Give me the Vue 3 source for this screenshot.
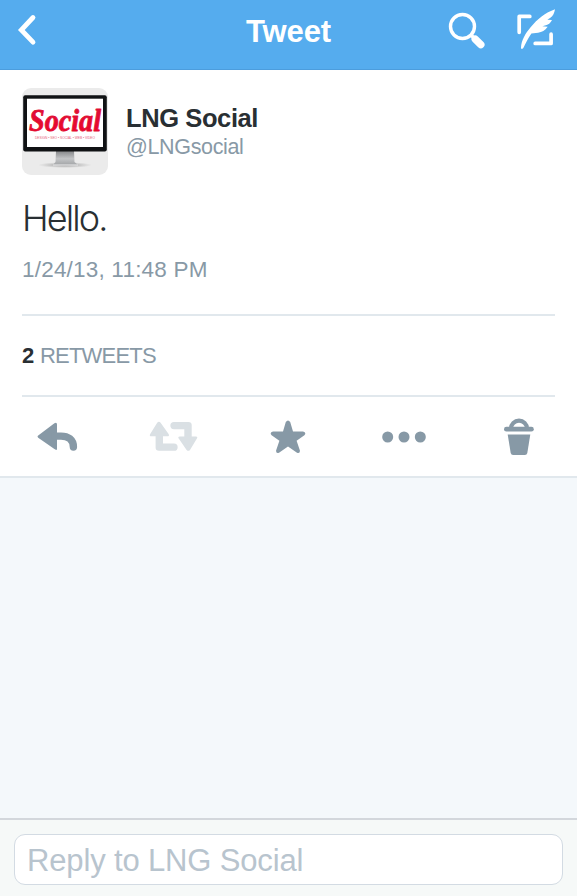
<template>
    <div class="tweet-page">
        <header class="nav-bar">
            <button class="nav-button back" aria-label="Back">
                <svg width="22" height="34" viewBox="0 0 22 34">
                    <path d="M16 4.5 4.3 17 16 29.2" fill="none" stroke="#fff" stroke-width="4.8" stroke-linecap="round" stroke-linejoin="miter" />
                </svg>
            </button>
            <h1 class="nav-title">Tweet</h1>
            <div class="nav-actions">
                <button class="nav-button" aria-label="Search">
                    <svg width="38" height="40" viewBox="0 0 38 40">
                        <circle cx="14.5" cy="16.5" r="12" fill="none" stroke="#fff" stroke-width="3.4" />
                        <path d="M23 25 26 28" stroke="#fff" stroke-width="3.5" />
                        <path d="M27.2 29.1 32.8 34.7" stroke="#fff" stroke-width="7.4" stroke-linecap="round" />
                    </svg>
                </button>
                <button class="nav-button" aria-label="Compose">
                    <svg width="40" height="42" viewBox="0 0 40 42">
                        <path d="M3.2 24.3V8.4H13.8M19.2 35.4H35.1V26.2" fill="none" stroke="#fff" stroke-width="3.7" stroke-linecap="round" stroke-linejoin="round" />
                        <path d="M5 39.8C5.3 32.5 9.3 25.6 14.6 19.3 21 11.2 29.5 4.6 39 1.2 38.5 4.8 37 7.8 34.4 9.8L31.3 11.7 36 11.9C34.6 14.9 32.3 16.8 29 17.5L26.3 18.2 31.7 18.8C29 22.6 26 24.2 22.1 24.7L15.4 25.4C12.2 30.2 9.8 34.8 7.7 39.3 6.9 41.2 5 41.6 5 39.8Z" fill="#fff" />
                    </svg>
                </button>
            </div>
        </header>

        <main class="tweet-card">
            <section class="author">
                <svg class="avatar" width="86" height="87" viewBox="0 0 86 87">
                    <defs>
                        <linearGradient id="stand" x1="0" y1="0" x2="0" y2="1">
                            <stop offset="0" stop-color="#858789" />
                            <stop offset="0.55" stop-color="#c3c5c7" />
                            <stop offset="1" stop-color="#a2a4a6" />
                        </linearGradient>
                        <linearGradient id="ink" x1="0" y1="0" x2="0" y2="1">
                            <stop offset="0" stop-color="#d9123c" />
                            <stop offset="1" stop-color="#f00428" />
                        </linearGradient>
                        <radialGradient id="shadow">
                            <stop offset="0" stop-color="#777" stop-opacity="0.8" />
                            <stop offset="1" stop-color="#999" stop-opacity="0" />
                        </radialGradient>
                    </defs>
                    <rect width="86" height="87" rx="9" fill="#ebebeb" />
                    <ellipse cx="43" cy="77" rx="27" ry="3" fill="url(#shadow)" />
                    <path d="M34 63H52L52.5 74 56 77H31L33.5 74Z" fill="url(#stand)" />
                    <path d="M31 77H56" stroke="#e4e5e6" stroke-width="1.2" />
                    <rect x="1.2" y="7.3" width="83.6" height="56.3" rx="2" fill="#101214" />
                    <rect x="5" y="10.7" width="76" height="48.3" fill="#fff" />
                    <text class="brand" x="7" y="43" textLength="72" lengthAdjust="spacingAndGlyphs">Social</text>
                    <text class="brand-tags" x="13" y="51" textLength="60" lengthAdjust="spacingAndGlyphs">DESIGN • SEO • SOCIAL • WEB • VIDEO</text>
                </svg>
                <div class="names">
                    <div class="name">{{ tweet.name }}</div>
                    <div class="handle">@{{ tweet.handle }}</div>
                </div>
            </section>

            <p class="tweet-text">{{ tweet.text }}</p>
            <div class="date">{{ tweet.date }}</div>

            <div class="stats">
                <strong>{{ tweet.retweets }}</strong>
                <span>RETWEETS</span>
            </div>

            <div class="actions">
                <svg class="reply" width="41" height="40" viewBox="0 0 41 40">
                    <path d="M1.2 18.5 17.4 6.2Q20 4.6 20 7.6V31.4Q20 34 17.4 32.1L1.2 20.7Q-.1 19.6 1.2 18.5Z" />
                    <path d="M18 19.1H24C31 19.1 36.4 22.5 36.4 30" fill="none" stroke="#8799a6" stroke-width="7.4" stroke-linecap="round" />
                </svg>
                <svg class="retweet" width="49" height="40" viewBox="0 0 49 40">
                    <path d="M8.2 5.7Q9.9 4 11.6 5.7L19.6 17Q20.8 19.3 18.4 19.3H14V26.5H25A3.65 3.65 0 0 1 25 33.8H10Q6.6 33.8 6.6 30.6V19.3H2.3Q0 19.3 1.2 17Z" />
                    <path d="M41 32.9Q39.3 34.6 37.6 32.9L29.7 21.6Q28.5 19.4 30.9 19.4H35.3V12.2H25A3.65 3.65 0 0 1 25 4.9H39.3Q42.7 4.9 42.7 8.1V19.4H46.8Q49.1 19.4 47.9 21.6Z" />
                </svg>
                <svg class="star" width="36" height="40" viewBox="0 0 36 40">
                    <path d="M15.8 4Q18 .8 20.2 4L23 13.6H33Q36.8 14.5 34.4 17.2L26.6 22.8 29.9 32.6Q30.1 36 27 34.8L18 28.6 9 34.8Q5.9 36 6.1 32.6L9.4 22.8 1.6 17.2Q-.8 14.5 3 13.6H13Z" />
                </svg>
                <svg class="more" width="44" height="40" viewBox="0 0 44 40">
                    <circle v-for="cx in [5.7, 22, 38.3]" :key="cx" :cx="cx" cy="20" r="5.5" />
                </svg>
                <svg class="trash" width="30" height="40" viewBox="0 0 30 40">
                    <path d="M7 10.5A8 7.8 0 0 1 23 10.5" fill="none" stroke="#8799a6" stroke-width="4.2" />
                    <rect y="8.8" width="29.8" height="4.8" rx="2.4" />
                    <path d="M3.7 16.5H26.3L23.3 35Q22.9 37 20.9 37H9.1Q7.1 37 6.7 35Z" />
                </svg>
            </div>
        </main>

        <footer class="reply-bar">
            <input v-model="reply" class="reply-input" type="text" :placeholder="`Reply to ${tweet.name}`">
        </footer>
    </div>
</template>

<script setup>
import { ref } from 'vue'

const reply = ref('')

const tweet = {
    name: 'LNG Social',
    handle: 'LNGsocial',
    text: 'Hello.',
    date: '1/24/13, 11:48 PM',
    retweets: 2
}
</script>

<style>
body {
    margin: 0;
}
</style>

<style scoped>
.tweet-page {
    display: flex;
    flex-direction: column;
    width: 100%;
    height: 100vh;
    overflow: hidden;
    background-color: #f4f8fb;
    font-family: "Liberation Sans", Arial, sans-serif;
}

.nav-bar {
    box-sizing: border-box;
    display: grid;
    grid-template-columns: 1fr auto 1fr;
    align-items: start;
    flex: none;
    height: 70px;
    padding: 0 21px 0 17px;
    border-bottom: 1px solid #4c9ddd;
    background-color: #55acee;
}

.nav-button {
    display: flex;
    padding: 0;
    border: 0;
    background: none;
}

.back {
    padding-top: 13px;
}

.nav-title {
    margin: 15px 0 0;
    padding-left: 4px;
    color: #fff;
    font-size: 31px;
    line-height: 34px;
    font-weight: bold;
    letter-spacing: -0.1px;
}

.nav-actions {
    display: flex;
    justify-content: flex-end;
    gap: 30px;
    padding-top: 10px;
}

.nav-actions .nav-button:last-child {
    margin-top: -2px;
}

.tweet-card {
    box-sizing: border-box;
    flex: none;
    height: 408px;
    padding: 18px 22px 0;
    border-bottom: 2px solid #e1e8ed;
    background-color: #fff;
}

.author {
    display: flex;
    gap: 18px;
}

.avatar {
    flex: none;
}

.brand {
    fill: url(#ink);
    stroke: #e20b32;
    stroke-width: 0.8px;
    stroke-linejoin: round;
    font: italic bold 31px "Liberation Serif", serif;
}

.brand-tags {
    fill: #e66078;
    font-size: 4px;
}

.names {
    padding-top: 16px;
}

.name {
    color: #292f33;
    font-size: 25.5px;
    line-height: 28px;
    font-weight: bold;
    letter-spacing: -0.4px;
}

.handle {
    color: #8899a6;
    font-size: 21.5px;
    line-height: 31px;
    letter-spacing: -0.35px;
}

.tweet-text {
    margin: 21px 0 0;
    color: #292f33;
    font-family: Inter, "Liberation Sans", sans-serif;
    font-size: 36px;
    line-height: 44px;
    font-weight: 300;
    letter-spacing: -1.9px;
}

.date {
    height: 74px;
    color: #8899a6;
    font-size: 22.5px;
    line-height: 59px;
    letter-spacing: 0.2px;
}

.stats {
    box-sizing: border-box;
    display: flex;
    gap: 6px;
    height: 83px;
    border-top: 2px solid #e1e8ed;
    border-bottom: 2px solid #e1e8ed;
    color: #8899a6;
    font-size: 22px;
    line-height: 79px;
    letter-spacing: -0.8px;
}

.stats strong {
    color: #292f33;
    letter-spacing: -0.3px;
}

.actions {
    display: grid;
    grid-template-columns: repeat(5, 1fr);
    justify-items: center;
    margin: 0 -22px;
    padding-top: 20px;
    fill: #8799a6;
}

.retweet {
    fill: #dae0e4;
}

.star,
.trash {
    margin-top: 1px;
}

.reply-bar {
    box-sizing: border-box;
    flex: none;
    height: 78px;
    margin-top: auto;
    padding: 14px 14px 0;
    border-top: 2px solid #d3d7dc;
    background-color: #f6f9f8;
}

.reply-input {
    box-sizing: border-box;
    display: block;
    width: 100%;
    height: 51px;
    padding: 2px 12px 0;
    border: 1px solid #d3dbe3;
    border-radius: 11px;
    outline: none;
    background-color: #fff;
    font-family: inherit;
    font-size: 31px;
    letter-spacing: -0.15px;
}

.reply-input::placeholder {
    color: #b8c4ce;
    opacity: 1;
}
</style>
